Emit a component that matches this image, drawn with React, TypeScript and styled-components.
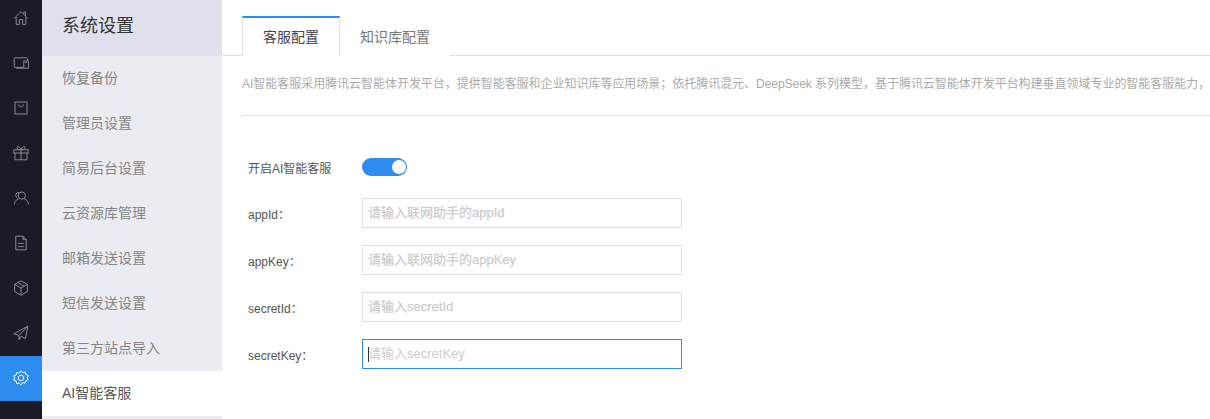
import styled, { createGlobalStyle } from "styled-components";

const GlobalStyle = createGlobalStyle`
  html, body {
    margin: 0;
    padding: 0;
    background: #fff;
    overflow: hidden;
  }
  body {
    font-family: "Liberation Sans", "Noto Sans CJK SC", sans-serif;
  }
  * {
    box-sizing: border-box;
  }
`;

const railIcons = [
  <>
    <path d="M1.500 10.500 10 2l8.500 8.500" />
    <path d="M4 9v9h4v-6h4v6h4V9" />
    <path d="M13.500 4.500V2.500h2V7" />
  </>,
  <>
    <path d="M13 15.500H2.500a1 1 0 0 1-1-1V4.500a1 1 0 0 1 1-1H17a1 1 0 0 1 1 1v3" />
    <rect x="13.500" y="7.500" width="6" height="9" />
    <path d="M4 16.500h9M15.500 9.500h2" />
  </>,
  <>
    <rect x="2.500" y="2.500" width="15" height="15" />
    <path d="M7 5.500c.5 2 1.500 3 3 3s2.500-1 3-3" />
  </>,
  <>
    <rect x="1" y="6" width="18" height="4" />
    <path d="M2.500 10v8.500h15V10M10 6v12.500" />
    <path d="M10 6C8 1 4.500 1 5 3.800 5.300 5.500 8 6 10 6c2 0 4.700-.5 5-2.200C15.500 1 12 1 10 6Z" />
  </>,
  <>
    <circle cx="11" cy="7" r="4.500" />
    <path d="M1.500 18c.5-3.500 2.500-6 5.500-7M8 3.500c-2.500-1-4.500.7-4.500 3.200 0 1.500.8 2.800 2 3.800" />
    <path d="M19.500 18c-.5-3.500-2.500-6-5.500-7" />
  </>,
  <>
    <path d="M3.500 1.500h9l4 4v13h-13Z" />
    <path d="M12.500 1.500v4h4M6.500 10.500h7M6.500 14.500h7" />
  </>,
  <>
    <path d="M10 1 18 5.500v9L10 19l-8-4.500v-9Z" />
    <path d="M2 5.500 10 10l8-4.500M10 10v9M6 3.300l8 4.500" />
  </>,
  <>
    <path d="M18.500 1.500 1 11l6.500 2 11-11.500ZM18.500 1.500l-3 15.500-5.500-3-2.500 4.500v-5" />
  </>,
  <>
    <path d="M10 1 12.200 3.200l3-.6.9 3 2.900 1.100-1 2.800 1 2.800-2.900 1.100-.9 3-3-.6L10 18.600l-2.200-2.200-3 .6-.9-3L1 12.900l1-2.800-1-2.800 2.900-1.100.9-3 3 .6Z" />
    <path d="M10 6.200 13.300 8.100v3.800L10 13.800l-3.300-1.900V8.100Z" />
  </>,
];

const menuItems = [
  "恢复备份",
  "管理员设置",
  "简易后台设置",
  "云资源库管理",
  "邮箱发送设置",
  "短信发送设置",
  "第三方站点导入",
  "AI智能客服",
];

const fields = [
  { label: "appId：", placeholder: "请输入联网助手的appId" },
  { label: "appKey：", placeholder: "请输入联网助手的appKey" },
  { label: "secretId：", placeholder: "请输入secretId" },
  { label: "secretKey：", placeholder: "请输入secretKey", focused: true },
];

const App = () => {
  return (
    <Page>
      <GlobalStyle />
      <Rail>
        {railIcons.map((icon, index) => (
          <RailItem key={index} $active={index === 8}>
            <svg width="16" height="16" viewBox="0 0 20 20" fill="none" stroke="currentColor" strokeWidth="1.250">
              {icon}
            </svg>
          </RailItem>
        ))}
      </Rail>
      <SideNav>
        <SideTitle>系统设置</SideTitle>
        {menuItems.map((item) => (
          <SideItem key={item} $active={item === "AI智能客服"}>
            {item}
          </SideItem>
        ))}
      </SideNav>
      <Main>
        <Tabs>
          <Tab $active>客服配置</Tab>
          <Tab>知识库配置</Tab>
        </Tabs>
        <Description>
          AI智能客服采用腾讯云智能体开发平台，提供智能客服和企业知识库等应用场景；依托腾讯混元、DeepSeek 系列模型，基于腾讯云智能体开发平台构建垂直领域专业的智能客服能力，
        </Description>
        <Form>
          <ToggleRow>
            <Label>开启AI智能客服</Label>
            <Toggle />
          </ToggleRow>
          {fields.map((field) => (
            <FieldRow key={field.label}>
              <Label>{field.label}</Label>
              <FakeInput $focused={field.focused}>
                {field.focused && <Caret />}
                {field.placeholder}
              </FakeInput>
            </FieldRow>
          ))}
        </Form>
      </Main>
    </Page>
  );
};

export default App;

const Page = styled.div`
  display: flex;
  width: 1210px;
  height: 419px;
  overflow: hidden;
`;

const Rail = styled.div`
  display: flex;
  flex-direction: column;
  flex: none;
  width: 42px;
  background: #1a1b27;
`;

const RailItem = styled.div<{ $active?: boolean }>`
  display: flex;
  align-items: center;
  justify-content: center;
  height: 45px;
  padding-bottom: ${({ $active }) => ($active ? "2px" : "10px")};
  margin-top: ${({ $active }) => ($active ? "-4px" : "0")};
  color: ${({ $active }) => ($active ? "#fff" : "#8a8a8f")};
  background: ${({ $active }) => ($active ? "#2d8cf0" : "transparent")};
`;

const SideNav = styled.div`
  flex: none;
  width: 180px;
  background: #ebecf2;
`;

const SideTitle = styled.div`
  height: 56px;
  padding-left: 20px;
  line-height: 52px;
  font-size: 18px;
  color: #333;
  background: #e0e0ec;
`;

const SideItem = styled.div<{ $active?: boolean }>`
  height: 45px;
  padding-left: 20px;
  line-height: 45px;
  font-size: 14px;
  color: ${({ $active }) => ($active ? "#555" : "#858585")};
  background: ${({ $active }) => ($active ? "#fff" : "transparent")};
`;

const Main = styled.div`
  flex: 1;
  min-width: 0;
  background: #fff;
`;

const Tabs = styled.div`
  display: flex;
  height: 56px;
  padding: 16px 0 0 20px;
  border-bottom: 1px solid #e0e0e8;
`;

const Tab = styled.div<{ $active?: boolean }>`
  height: 40px;
  padding: 0 20px;
  line-height: 39px;
  font-size: 14px;
  color: ${({ $active }) => ($active ? "#444" : "#777")};
  background: #fff;
  border-top: 2px solid ${({ $active }) => ($active ? "#2d8cf0" : "transparent")};
  border-left: ${({ $active }) => ($active ? "1px solid #e0e0e8" : "none")};
  border-right: ${({ $active }) => ($active ? "1px solid #e0e0e8" : "none")};
`;

const Description = styled.div`
  height: 60px;
  margin-left: 20px;
  padding-top: 20px;
  font-size: 12px;
  line-height: 17px;
  letter-spacing: -0.03px;
  color: #aaa;
  white-space: nowrap;
  border-bottom: 1px solid #e2e2e2;
`;

const Form = styled.div`
  display: flex;
  flex-direction: column;
  gap: 17px;
  padding: 42px 0 0 26px;
`;

const ToggleRow = styled.div`
  display: flex;
  align-items: center;
  height: 18px;
  margin-bottom: 5px;
`;

const FieldRow = styled.div`
  display: flex;
  align-items: center;
  height: 30px;
`;

const Label = styled.div`
  flex: none;
  width: 114px;
  font-size: 12px;
  color: #555;
`;

const Toggle = styled.div`
  position: relative;
  width: 45px;
  height: 18px;
  border-radius: 9px;
  background: #2d8cf0;

  &::after {
    content: "";
    position: absolute;
    top: 2px;
    right: 1px;
    width: 14px;
    height: 14px;
    border-radius: 50%;
    background: #fff;
  }
`;

const FakeInput = styled.div<{ $focused?: boolean }>`
  position: relative;
  width: 320px;
  height: 30px;
  padding-left: 5px;
  line-height: 28px;
  font-size: 13px;
  color: #ccc;
  -webkit-text-stroke: ${({ $focused }) => ($focused ? "0" : "0.25px")};
  border: 1px solid ${({ $focused }) => ($focused ? "#2d8cf0" : "#dddee6")};
`;

const Caret = styled.span`
  position: absolute;
  top: 7px;
  left: 5px;
  width: 1px;
  height: 15px;
  background: #333;
`;
